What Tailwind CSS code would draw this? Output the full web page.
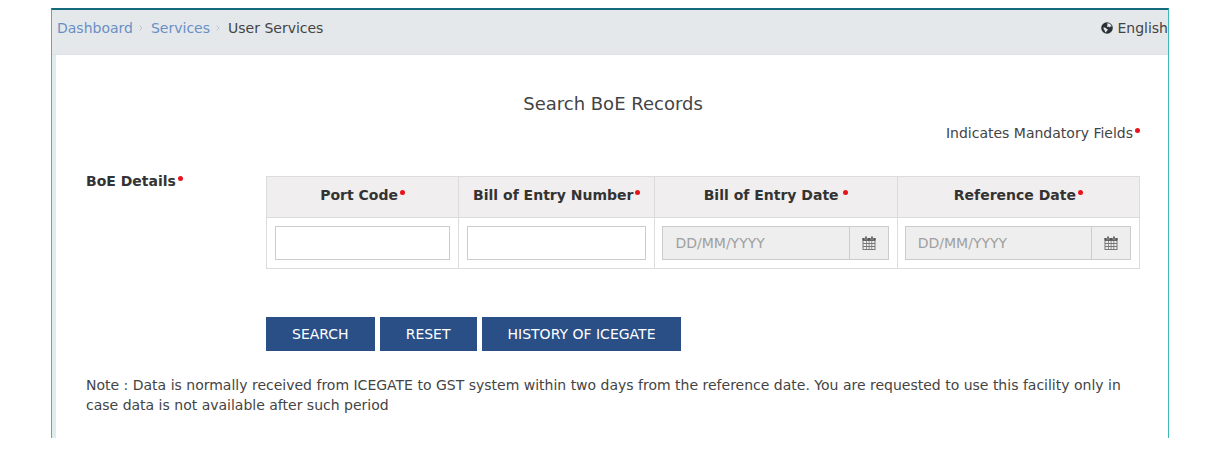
<!DOCTYPE html>
<html lang="en">
  <head>
    <meta charset="UTF-8" />
    <meta name="viewport" content="width=device-width, initial-scale=1.0" />
    <title>Search BoE Records</title>
    <!-- Tailwind CSS CDN -->
    <script src="https://cdn.jsdelivr.net/npm/@tailwindcss/browser@4"></script>
  </head>
  <body class="bg-white text-[#444] text-[14px] leading-5 font-['Verdana','DejaVu_Sans',sans-serif] px-[51px] py-2">
    <div class="border-x border-t-2 border-x-[#3fb8bb] border-t-[#14697a] bg-[#dfecef]">
      <!-- Breadcrumb bar -->
      <header class="flex justify-between bg-[#e4e8eb] border-b border-[#dde1e4] pl-[5px] pt-2 pb-4 overflow-hidden">
        <nav aria-label="Breadcrumb">
          <ol class="flex items-center">
            <li class="flex items-center">
              <a href="#" class="text-[#6a8fc4] hover:underline">Dashboard</a>
              <svg class="w-1 h-2 ml-1.5 mr-2" viewBox="0 0 4 8" fill="none" stroke="#bfc5ca"><path d="M.5 1.5 3 4 .5 6.5" /></svg>
            </li>
            <li class="flex items-center">
              <a href="#" class="text-[#6a8fc4] hover:underline">Services</a>
              <svg class="w-1 h-2 ml-1.5 mr-2" viewBox="0 0 4 8" fill="none" stroke="#bfc5ca"><path d="M.5 1.5 3 4 .5 6.5" /></svg>
            </li>
            <li>User Services</li>
          </ol>
        </nav>
        <button type="button" class="flex items-center gap-1">
          <svg class="w-3 h-3" viewBox="0 0 12 12">
            <circle cx="6" cy="6" r="5.8" fill="#2b3035" />
            <path d="M6.600 1.300 8.800 1.700 10.300 3.400 10.500 4.800 9.200 4.600 8.400 5.400 7.300 4.600 6.300 4.900 5.800 3.900 6.800 3.100 6 2.300z" fill="#e4e8eb" />
            <path d="M2.400 5.400 4 5.600 5.200 6.600 6.700 7.200 6.500 8.500 5.500 9.300 5 10.600 4 10.100 3.800 8.500 2.800 7.500z" fill="#e4e8eb" />
          </svg>
          English
        </button>
      </header>

      <main class="ml-1 bg-white pl-[30px] pr-7 pt-[37px] pb-[23px]">
        <h1 class="text-center text-[18px] leading-6">Search BoE Records</h1>
        <p class="text-right pt-[7px]">Indicates Mandatory Fields<span class="inline-block align-[5px] w-[5px] h-[5px] ml-0.5 rounded-full bg-[#e8141c]"></span></p>

        <form class="pt-7">
          <div class="flex items-start">
            <h2 class="w-[180px] shrink-0 font-bold text-[#333]">BoE Details<span class="inline-block align-[5px] w-[5px] h-[5px] ml-0.5 rounded-full bg-[#e8141c]"></span></h2>
            <table class="mt-[5px] w-full min-w-0 table-fixed border-collapse">
              <thead>
                <tr class="bg-[#f0eeee] text-[#333]">
                  <th class="w-[22%] h-[41px] pb-1 border border-[#dcdcdc]">
                    <label for="port-code">Port Code<span class="inline-block align-[5px] w-[5px] h-[5px] ml-0.5 rounded-full bg-[#e8141c]"></span></label>
                  </th>
                  <th class="w-[22.5%] pb-1 border border-[#dcdcdc]">
                    <label for="boe-number">Bill of Entry Number<span class="inline-block align-[5px] w-[5px] h-[5px] ml-0.5 rounded-full bg-[#e8141c]"></span></label>
                  </th>
                  <th class="pb-1 border border-[#dcdcdc]">
                    <label for="boe-date">Bill of Entry Date <span class="inline-block align-[5px] w-[5px] h-[5px] rounded-full bg-[#e8141c]"></span></label>
                  </th>
                  <th class="pb-1 border border-[#dcdcdc]">
                    <label for="reference-date">Reference Date<span class="inline-block align-[5px] w-[5px] h-[5px] ml-0.5 rounded-full bg-[#e8141c]"></span></label>
                  </th>
                </tr>
              </thead>
              <tbody>
                <tr>
                  <td class="p-2 border border-[#dcdcdc]">
                    <input type="text" id="port-code" class="block w-full h-[34px] px-3 border border-[#ccc]" />
                  </td>
                  <td class="p-2 border border-[#dcdcdc]">
                    <input type="text" id="boe-number" class="block w-full h-[34px] px-3 border border-[#ccc]" />
                  </td>
                  <td class="p-2 pl-[7px] border border-[#dcdcdc]">
                    <div class="flex h-[34px] border border-[#ccc] bg-[#eee]">
                      <input type="text" id="boe-date" readonly placeholder="DD/MM/YYYY" class="grow min-w-0 px-3 placeholder:text-[#a0a0a0]" />
                      <button type="button" aria-label="Pick bill of entry date" class="w-[39px] shrink-0 flex items-center justify-center border-l border-[#ccc]">
                        <svg class="w-[14px] h-[14px]" viewBox="0 0 14 14">
                          <path fill="#777" fill-rule="evenodd" d="M.500 2h13v12H.500zM1.500 5v2h2.500V5zm3.300 0v2h1.900V5zm2.700 0v2h1.900V5zm2.700 0v2h2.300V5zM1.500 8v2h2.500V8zm3.300 0v2h1.900V8zm2.700 0v2h1.900V8zm2.700 0v2h2.300V8zM1.500 11v2h2.500v-2zm3.300 0v2h1.900v-2zm2.700 0v2h1.900v-2zm2.700 0v2h2.300v-2z" />
                          <path fill="#555" d="M.500 2h13v2.500H.500z" />
                          <path stroke="#eee" stroke-width="2.600" d="M4 1.500v2M10 1.500v2" />
                          <path stroke="#555" stroke-width="1.600" stroke-linecap="round" d="M4 1v2M10 1v2" />
                        </svg>
                      </button>
                    </div>
                  </td>
                  <td class="p-2 pl-[7px] border border-[#dcdcdc]">
                    <div class="flex h-[34px] border border-[#ccc] bg-[#eee]">
                      <input type="text" id="reference-date" readonly placeholder="DD/MM/YYYY" class="grow min-w-0 px-3 placeholder:text-[#a0a0a0]" />
                      <button type="button" aria-label="Pick reference date" class="w-[39px] shrink-0 flex items-center justify-center border-l border-[#ccc]">
                        <svg class="w-[14px] h-[14px]" viewBox="0 0 14 14">
                          <path fill="#777" fill-rule="evenodd" d="M.500 2h13v12H.500zM1.500 5v2h2.500V5zm3.300 0v2h1.900V5zm2.700 0v2h1.900V5zm2.700 0v2h2.300V5zM1.500 8v2h2.500V8zm3.300 0v2h1.900V8zm2.700 0v2h1.900V8zm2.700 0v2h2.300V8zM1.500 11v2h2.500v-2zm3.300 0v2h1.900v-2zm2.700 0v2h1.900v-2zm2.700 0v2h2.300v-2z" />
                          <path fill="#555" d="M.500 2h13v2.500H.500z" />
                          <path stroke="#eee" stroke-width="2.600" d="M4 1.500v2M10 1.500v2" />
                          <path stroke="#555" stroke-width="1.600" stroke-linecap="round" d="M4 1v2M10 1v2" />
                        </svg>
                      </button>
                    </div>
                  </td>
                </tr>
              </tbody>
            </table>
          </div>

          <div class="flex flex-wrap gap-[5px] pl-[180px] pt-12">
            <button type="submit" class="h-[34px] px-[26px] bg-[#2a4f87] hover:bg-[#1f3f70] text-white">SEARCH</button>
            <button type="reset" class="h-[34px] px-[26px] bg-[#2a4f87] hover:bg-[#1f3f70] text-white">RESET</button>
            <button type="button" class="h-[34px] px-[26px] bg-[#2a4f87] hover:bg-[#1f3f70] text-white">HISTORY OF ICEGATE</button>
          </div>
        </form>

        <p class="pt-6">
          Note : Data is normally received from ICEGATE to GST system within two days from the reference date. You are requested to use this facility only in case data is not available after such period
        </p>
      </main>
    </div>
  </body>
</html>
